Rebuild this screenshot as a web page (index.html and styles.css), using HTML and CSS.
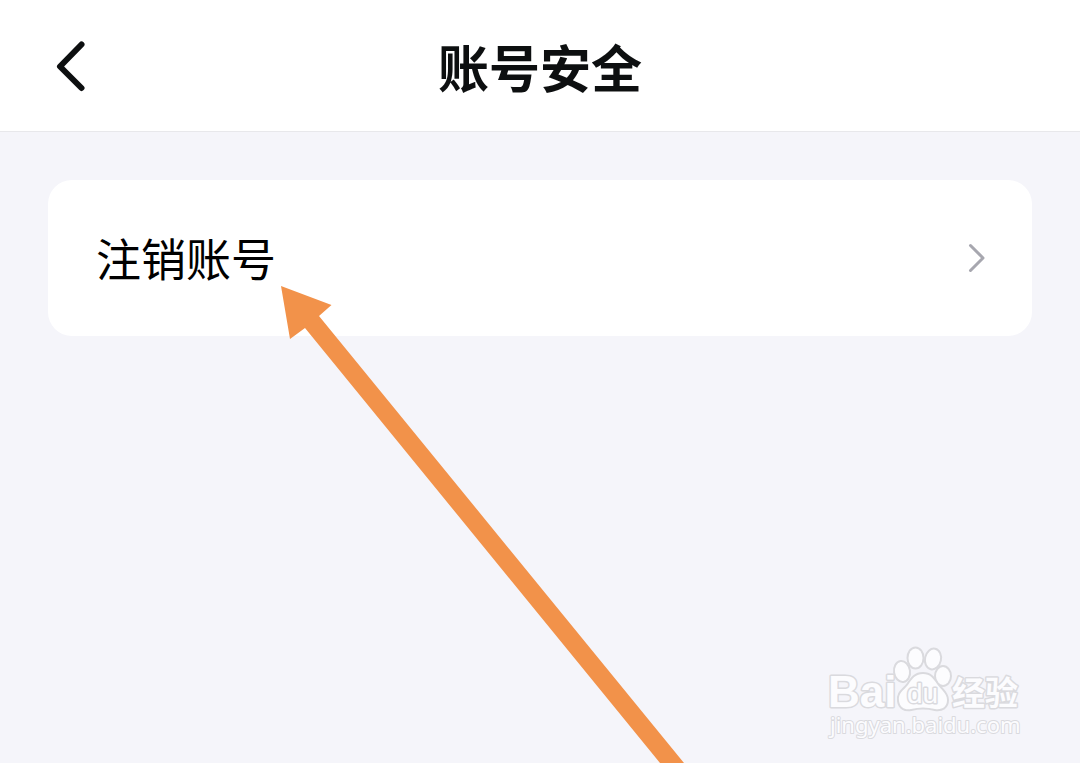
FILE: index.html
```html
<!DOCTYPE html>
<html lang="zh-CN">
<head>
<meta charset="utf-8">
<meta name="viewport" content="width=device-width, initial-scale=1">
<title>账号安全</title>
<link rel="stylesheet" href="styles.css">
</head>
<body>
<header class="header">
  <button class="back" type="button" aria-label="返回">
    <svg class="back-icon" width="32" height="56" viewBox="0 0 32 56" aria-hidden="true"><path d="M25.500 6.500 4 28.500 25.500 50"/></svg>
  </button>
  <h1 class="title">账号安全</h1>
</header>
<main class="content">
  <a class="row" href="#">
    <span>注销账号</span>
    <svg class="chevron" width="20" height="32" viewBox="0 0 20 32" aria-hidden="true"><path d="M6.500 3.500 19 16 6.500 28.500"/></svg>
  </a>
</main>
<svg class="pointer" width="404" height="477" viewBox="0 0 404 477" aria-hidden="true"><path d="M0 0 50.500 19 38 30 403 477H379L24 42 9 53Z"/></svg>
<svg class="watermark" width="204" height="100" viewBox="0 0 204 100" role="img" aria-label="Baidu 经验">
  <text class="brand" x="2" y="65">Bai</text>
  <g class="paw">
    <ellipse cx="76" cy="29.500" rx="7" ry="9.500" transform="rotate(-8 76 29.500)"/>
    <ellipse cx="89.500" cy="16" rx="7" ry="9.500"/>
    <ellipse cx="107" cy="17" rx="7" ry="9.500" transform="rotate(12 107 17)"/>
    <ellipse cx="117" cy="34" rx="7" ry="9"/>
    <path d="M97 32C89 32 86 37 82 43C77 49 72 51 73 59C74 66 79 68 85 67C93 65 101 65 109 67C116 68 121 65 121 58C121 51 115 48 111 42C107 36 104 32 97 32Z"/>
  </g>
  <text class="du" x="81" y="61">du</text>
  <text class="cn" x="126" y="63">经验</text>
  <text class="site" x="4" y="91">jingyan.baidu.com</text>
</svg>
</body>
</html>
```
FILE: styles.css
```css
* {
  box-sizing: border-box;
}

body {
  position: relative;
  min-height: 100vh;
  margin: 0;
  overflow-x: hidden;
  background: #f5f5fa;
  color: #000;
  font-family: "Noto Sans CJK SC", sans-serif;
}

.header {
  display: grid;
  grid-template-columns: 48px 1fr 48px;
  align-items: center;
  padding: 28px 48px 27px;
  border-bottom: 1px solid #e8e8eb;
  background: #fff;
}

.back {
  display: flex;
  padding: 0 8px;
  border: 0;
  background: none;
}

.back-icon,
.chevron {
  fill: none;
  stroke-linecap: round;
  stroke-linejoin: round;
}

.back-icon {
  stroke: #0d0f10;
  stroke-width: 6;
}

.title {
  margin: 0;
  color: #0d0f10;
  font-size: 51px;
  font-weight: 700;
  line-height: 76px;
  text-align: center;
}

.content {
  padding: 48px;
}

.row {
  display: flex;
  align-items: center;
  justify-content: space-between;
  padding: 44px 48px;
  border-radius: 24px;
  background: #fff;
  color: #000;
  font-size: 45px;
  line-height: 68px;
  text-decoration: none;
}

.chevron {
  overflow: visible;
  stroke: #a7a7af;
  stroke-width: 3;
}

.pointer {
  position: absolute;
  top: 286px;
  left: 281px;
  fill: #f2924a;
  pointer-events: none;
}

.watermark {
  position: absolute;
  right: 50px;
  bottom: 21px;
  fill: #fcfcfe;
  stroke: #dadade;
  stroke-width: 3;
  stroke-linejoin: round;
  paint-order: stroke;
  pointer-events: none;
}

.paw {
  stroke-width: 4;
}

.brand {
  font: 700 44px "Liberation Sans", sans-serif;
}

.du {
  font: 400 28px "Liberation Sans", sans-serif;
}

.cn {
  font: 700 33px "Noto Sans CJK SC", sans-serif;
}

.site {
  stroke-width: 2;
  font: 400 22px "Noto Sans", sans-serif;
}
```
